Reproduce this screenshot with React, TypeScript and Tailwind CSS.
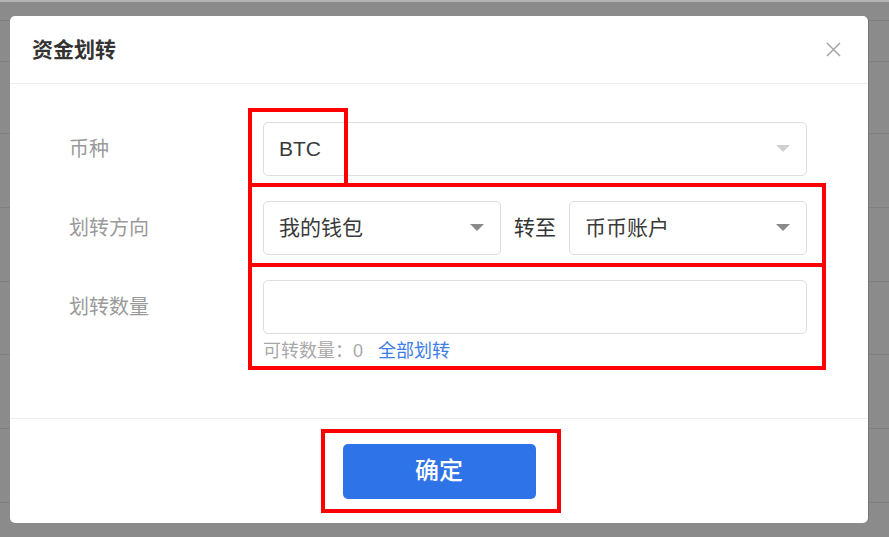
import { ReactNode } from 'react';

const font = "font-['Liberation_Sans','Noto_Sans_CJK_SC',sans-serif]";

function Caret({ light }: { light?: boolean }) {
  return (
    <svg width="14" height="8" viewBox="0 0 14 8" className={light ? 'text-[#d0d0d0]' : 'text-[#8a8a8a]'}>
      <path d="M0 0 H14 L7 7 Z" fill="currentColor" />
    </svg>
  );
}

function Select({ value, light, className = '' }: { value: string; light?: boolean; className?: string }) {
  return (
    <div
      className={`flex h-[54px] items-center justify-between rounded-[5px] border border-[#dedede] bg-white pl-[15px] pr-[16px] text-[21px] text-[#3a3a3a] ${className}`}
    >
      <span>{value}</span>
      <Caret light={light} />
    </div>
  );
}

function Row({ label, children }: { label: string; children: ReactNode }) {
  return (
    <div className="flex items-start">
      <div className="flex h-[54px] w-[194px] shrink-0 items-center text-[20px] text-[#9a9a9a]">{label}</div>
      <div className="flex-1">{children}</div>
    </div>
  );
}

export default function App() {
  const bgRows = [72, 74, 74, 73, 74, 74];

  return (
    <div className={`relative h-[537px] w-[889px] overflow-hidden bg-[#8b8b8b] ${font}`}>
      {/* dimmed page behind the dialog */}
      <div className="h-[2px] bg-[#b4b4b4]" />
      <div className="h-[19px] border-b border-[#7f7f7f]" />
      <div className="h-[41px] border-b border-[#7f7f7f]" />
      {bgRows.map((h, i) => (
        <div key={i} className="border-b border-[#7f7f7f]" style={{ height: h }} />
      ))}

      {/* dialog */}
      <div className="absolute left-[10px] top-[16px] flex h-[507px] w-[858px] flex-col rounded-[5px] bg-white shadow-[1px_0_0_#777]">
        <div className="flex h-[68px] shrink-0 items-center justify-between border-b border-[#eeeeee] pl-[22px] pr-[27px]">
          <h2 className="text-[21px] font-bold text-[#333]">资金划转</h2>
          <button className="text-[#a8a8a8]">
            <svg width="15" height="15" viewBox="0 0 15 15">
              <path d="M1 1 L14 14 M14 1 L1 14" stroke="currentColor" strokeWidth="1.6" fill="none" />
            </svg>
          </button>
        </div>

        <div className="flex flex-1 flex-col gap-[25px] border-b border-[#eeeeee] pl-[59px] pr-[61px] pt-[38px]">
          <Row label="币种">
            <Select value="BTC" light />
          </Row>
          <Row label="划转方向">
            <div className="flex items-center">
              <Select value="我的钱包" className="w-[238px]" />
              <span className="flex-1 text-center text-[21px] text-[#333]">转至</span>
              <Select value="币币账户" className="w-[238px]" />
            </div>
          </Row>
          <Row label="划转数量">
            <div className="h-[54px] rounded-[5px] border border-[#dedede] bg-white" />
            <div className="mt-[8px] flex items-center text-[18px] leading-[18px] text-[#a8a8a8]">
              <span>可转数量：0</span>
              <span className="ml-[15px] text-[#3d7de8]">全部划转</span>
            </div>
          </Row>
        </div>

        <div className="flex h-[104px] shrink-0 items-center justify-center">
          <button className="h-[55px] w-[193px] rounded-[5px] bg-[#2f73e8] text-[24px] font-medium text-white">
            确定
          </button>
        </div>
      </div>

      {/* red annotation frames */}
      <div className="absolute left-[248px] top-[108px] h-[79px] w-[100px] border-4 border-[#ff0000]" />
      <div className="absolute left-[248px] top-[183px] h-[84px] w-[578px] border-4 border-[#ff0000]" />
      <div className="absolute left-[248px] top-[263px] h-[107px] w-[578px] border-4 border-[#ff0000]" />
      <div className="absolute left-[321px] top-[429px] h-[84px] w-[240px] border-4 border-[#ff0000]" />
    </div>
  );
}
